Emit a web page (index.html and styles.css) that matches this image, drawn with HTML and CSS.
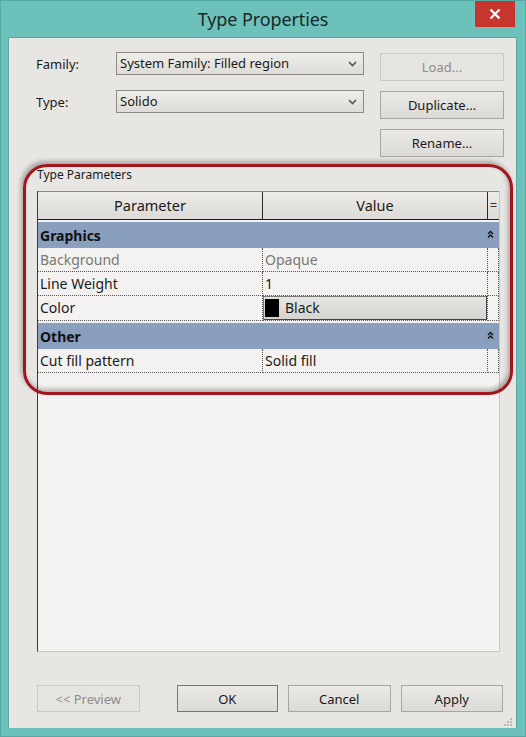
FILE: index.html
```html
<!DOCTYPE html>
<html>
<head>
<meta charset="utf-8">
<link rel="stylesheet" href="styles.css">
</head>
<body>
<div class="window">
  <div class="titlebar">
    <span></span>
    <div class="title">Type Properties</div>
    <div class="close-wrap"><div class="close">
      <svg width="12" height="12" viewBox="0 0 12 12"><path d="M1.5 1.5 L10.5 10.5 M10.5 1.5 L1.5 10.5" stroke="#fff" stroke-width="2.2" fill="none"/></svg>
    </div></div>
  </div>
  <div class="content">
    <div class="top">
      <div class="label">Family:</div>
      <div class="select"><span>System Family: Filled region</span>
        <svg class="chev" width="9" height="6" viewBox="0 0 9 6"><path d="M1 1 L4.5 4.5 L8 1" stroke="#555" stroke-width="1.6" fill="none"/></svg></div>
      <div class="btn disabled">Load...</div>
      <div class="label">Type:</div>
      <div class="select"><span>Solido</span>
        <svg class="chev" width="9" height="6" viewBox="0 0 9 6"><path d="M1 1 L4.5 4.5 L8 1" stroke="#555" stroke-width="1.6" fill="none"/></svg></div>
      <div class="btn">Duplicate...</div>
      <div></div><div></div>
      <div class="btn">Rename...</div>
    </div>
    <div class="section-label">Type Parameters</div>
    <div class="table">
      <div class="thead">
        <div class="th c1">Parameter</div>
        <div class="th c2">Value</div>
        <div class="th c3">=</div>
      </div>
      <div class="group"><span>Graphics</span>
        <svg class="collapse" width="7" height="9" viewBox="0 0 7 9"><path d="M1 4 L3.5 1.5 L6 4 M1 7.5 L3.5 5 L6 7.5" stroke="#111" stroke-width="1.4" fill="none"/></svg></div>
      <div class="row muted"><div class="td c1">Background</div><div class="td c2">Opaque</div><div class="td c3"></div></div>
      <div class="row"><div class="td c1">Line Weight</div><div class="td c2">1</div><div class="td c3"></div></div>
      <div class="row tall"><div class="td c1">Color</div><div class="td c2 colorcell"><div class="colorbtn"><span class="swatch"></span>Black</div></div><div class="td c3"></div></div>
      <div class="group"><span>Other</span>
        <svg class="collapse" width="7" height="9" viewBox="0 0 7 9"><path d="M1 4 L3.5 1.5 L6 4 M1 7.5 L3.5 5 L6 7.5" stroke="#111" stroke-width="1.4" fill="none"/></svg></div>
      <div class="row"><div class="td c1">Cut fill pattern</div><div class="td c2">Solid fill</div><div class="td c3"></div></div>
    </div>
    <div class="bottom">
      <div class="btn wide disabled preview">&lt;&lt; Preview</div>
      <div class="btn wide ok">OK</div>
      <div class="btn wide">Cancel</div>
      <div class="btn wide">Apply</div>
    </div>
    <svg class="grip" width="10" height="10" viewBox="0 0 10 10" fill="#bdbab6">
      <rect x="7" y="1" width="2" height="2"/><rect x="4" y="4" width="2" height="2"/><rect x="7" y="4" width="2" height="2"/>
      <rect x="1" y="7" width="2" height="2"/><rect x="4" y="7" width="2" height="2"/><rect x="7" y="7" width="2" height="2"/>
    </svg>
    <div class="annotation"></div>
  </div>
</div>
</body>
</html>
```
FILE: styles.css
```css
html, body {
  margin: 0;
  padding: 0;
}
body {
  width: 526px;
  height: 737px;
  overflow: hidden;
  background: #6ac0b9;
  font-family: "Noto Sans", "DejaVu Sans", sans-serif;
  color: #1a1a1a;
}
.window {
  width: 526px;
  height: 737px;
  box-sizing: border-box;
  border: 1px solid #56aaa3;
  background: #6cc2bb;
  display: flex;
  flex-direction: column;
}
.titlebar {
  height: 36px;
  display: grid;
  grid-template-columns: 1fr auto 1fr;
  align-items: start;
}
.title {
  font-size: 18px;
  line-height: 37px;
  color: #1b2827;
  letter-spacing: -0.1px;
}
.close-wrap {
  display: flex;
  justify-content: flex-end;
  padding-right: 10px;
}
.close {
  width: 40px;
  height: 26px;
  background: #c6362f;
  display: flex;
  align-items: center;
  justify-content: center;
}
.content {
  position: relative;
  margin: 0 8px 0 7px;
  height: 691px;
  box-sizing: border-box;
  background: #e8e6e3;
  border: 1px solid #5aa9a2;
  border-bottom: none;
  padding: 15px 13px 0 27px;
  display: flex;
  flex-direction: column;
}
.top {
  display: grid;
  grid-template-columns: 80px 264px 124px;
  grid-auto-rows: 28px;
  row-gap: 10px;
  align-items: start;
}
.label {
  font-size: 13px;
  line-height: 23px;
}
.select {
  height: 23px;
  box-sizing: border-box;
  margin-right: 16px;
  border: 1px solid #8d8a86;
  background: linear-gradient(#efedea, #dedcd8);
  font-size: 13px;
  line-height: 21px;
  padding-left: 3px;
  display: flex;
  justify-content: space-between;
  align-items: center;
  margin-top: -1px;
}
.chev {
  margin-right: 6px;
}
.btn {
  height: 28px;
  box-sizing: border-box;
  border: 1px solid #a8a6a2;
  background: linear-gradient(#ebe9e6, #dcdad6);
  font-size: 13px;
  display: flex;
  align-items: center;
  justify-content: center;
  color: #1a1a1a;
}
.btn.disabled {
  border-color: #cbc9c5;
  background: #e6e4e1;
  color: #8e8c89;
}
.section-label {
  margin-top: 10px;
  margin-left: 1px;
  font-size: 12px;
  line-height: 16px;
  color: #1a1a1a;
}
.table {
  margin-top: 8px;
  margin-left: 1px;
  width: 463px;
  height: 461px;
  box-sizing: border-box;
  border-left: 1px solid #3c3a38;
  border-right: 1px solid #c9c7c3;
  border-bottom: 1px solid #c9c7c3;
  background: #f3f2f0;
  display: flex;
  flex-direction: column;
}
.thead {
  display: flex;
  height: 29px;
  box-sizing: border-box;
  border-top: 1px solid #8f8c88;
  border-bottom: 1px solid #1e1e1e;
  background: linear-gradient(#ecebe8, #dcdad7);
  margin-bottom: 2px;
}
.th {
  font-size: 14.5px;
  line-height: 27px;
  text-align: center;
  box-sizing: border-box;
}
.c1 { width: 225px; }
.c2 { width: 225px; }
.c3 { width: 11px; }
.th.c1, .th.c2 {
  border-right: 1px solid #2a2a2a;
}
.th.c3 {
  color: #333;
  font-size: 13px;
}
.group {
  height: 26px;
  background: #8a9ebd;
  display: flex;
  align-items: center;
  justify-content: space-between;
  font-size: 14px;
  font-weight: bold;
  padding-left: 2px;
  padding-right: 5px;
  color: #111;
}
.collapse {
  margin-top: -2px;
}
.row {
  display: flex;
  height: 24px;
}
.row.tall {
  height: 25px;
  margin-bottom: 2px;
}
.td {
  box-sizing: border-box;
  font-size: 14px;
  line-height: 23px;
  padding-left: 2px;
  border-bottom: 1px dotted #555;
  border-right: 1px dotted #555;
  white-space: nowrap;
}
.row.tall .td {
  line-height: 24px;
}
.row.muted .td {
  color: #7a7876;
}
.colorcell {
  padding: 0;
}
.colorbtn {
  height: 24px;
  box-sizing: border-box;
  border: 1px solid #7c7a77;
  border-right-color: #444;
  border-bottom-color: #444;
  background: linear-gradient(#e7e5e2, #d6d4d0);
  display: flex;
  align-items: center;
  padding-left: 1px;
  line-height: 22px;
}
.swatch {
  width: 14px;
  height: 18px;
  background: #000;
  margin-right: 6px;
}
.bottom {
  margin-top: 33px;
  display: flex;
  gap: 10px;
  margin-left: 1px;
}
.btn.wide {
  width: 103px;
  height: 27px;
}
.btn.preview {
  margin-right: 27px;
}
.btn.ok {
  width: 102px;
  border-color: #3b80d4;
}
.grip {
  position: absolute;
  right: 3px;
  bottom: 1px;
}
.annotation {
  position: absolute;
  left: 14px;
  top: 126px;
  width: 490px;
  height: 231px;
  box-sizing: border-box;
  border: 3px solid #a3161d;
  border-radius: 24px;
  box-shadow: -2px -3px 4px rgba(0, 0, 0, 0.28), inset -2px -3px 4px rgba(0, 0, 0, 0.28);
  pointer-events: none;
}
```
